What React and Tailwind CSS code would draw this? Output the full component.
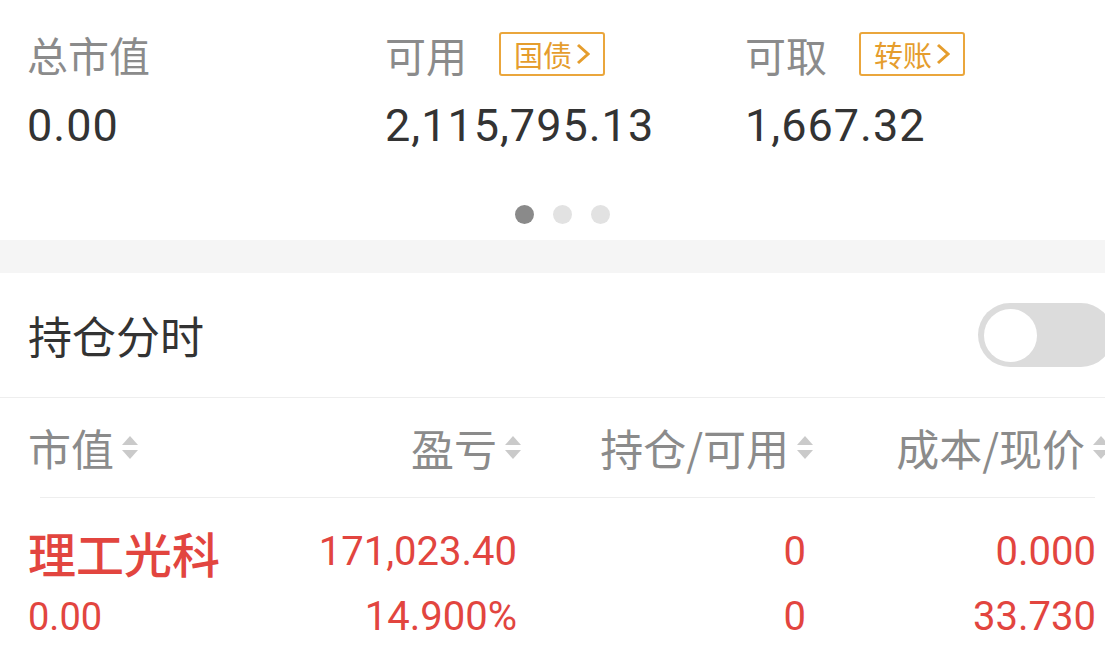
import React from 'react'

const cjk = "font-['Noto_Sans_CJK_SC',sans-serif]"
const num = "font-['Roboto','Noto_Sans_CJK_SC',sans-serif]"

const SortArrows = () => (
  <svg width="18" height="28" viewBox="0 0 18 28" className="shrink-0">
    <path d="M1 11 L9 2 L17 11 Z" fill="#cacaca" />
    <path d="M1 16 L17 16 L9 25 Z" fill="#cacaca" />
  </svg>
)

const Badge = ({ text }) => (
  <div className="flex items-center h-[44px] px-[13px] gap-[4px] border-[2.5px] border-[#eaa63c] rounded-[3px]">
    <span className={`${cjk} text-[29px] leading-none text-[#e59d2d]`}>{text}</span>
    <svg width="14" height="22" viewBox="0 0 14 22">
      <path d="M2 2 L12 11 L2 20" stroke="#e59d2d" strokeWidth="3" fill="none" />
    </svg>
  </div>
)

const Summary = ({ label, value, badge }) => (
  <div className="flex flex-col">
    <div className="flex items-center gap-[32px] h-[48px]">
      <span className={`${cjk} text-[41px] leading-[48px] text-[#8b8b8b]`}>{label}</span>
      {badge && <Badge text={badge} />}
    </div>
    <div className={`${num} mt-[20px] text-[45px] leading-[56px] tracking-[1px] text-[#333333]`}>{value}</div>
  </div>
)

export default function App() {
  return (
    <div className="w-[1105px] h-[654px] overflow-hidden bg-white">
      {/* account summary */}
      <div className="h-[240px] pt-[30px]">
        <div className="grid grid-cols-[358px_360px_1fr] pl-[27px]">
          <Summary label="总市值" value="0.00" />
          <Summary label="可用" value="2,115,795.13" badge="国债" />
          <Summary label="可取" value="1,667.32" badge="转账" />
        </div>
        <div className="flex justify-center gap-[19px] mt-[51px] pl-[20px]">
          <div className="w-[19px] h-[19px] rounded-full bg-[#8a8a8a]" />
          <div className="w-[19px] h-[19px] rounded-full bg-[#e2e2e2]" />
          <div className="w-[19px] h-[19px] rounded-full bg-[#e2e2e2]" />
        </div>
      </div>

      <div className="h-[33px] bg-[#f5f5f5]" />

      {/* 持仓分时 */}
      <div className="h-[125px] flex items-center justify-between pl-[28px] border-b border-[#eeeeee]">
        <span className={`${cjk} text-[44px] leading-none text-[#333333]`}>持仓分时</span>
        <div className="w-[135px] h-[64px] -mr-[8px] mt-[0px] rounded-full bg-[#dcdcdc] flex items-center pl-[6px] shrink-0">
          <div className="w-[53px] h-[53px] rounded-full bg-white" />
        </div>
      </div>

      {/* table header */}
      <div className="ml-[40px] mr-[10px] border-b border-[#eeeeee]">
        <div className={`${cjk} -ml-[12px] -mr-[100px] h-[99px] grid grid-cols-[200px_296px_296px_296px] items-center text-[43px] leading-none text-[#8b8b8b]`}>
          <div className="flex items-center gap-[7px]">
            <span>市值</span>
            <SortArrows />
          </div>
          <div className="flex items-center justify-end gap-[7px] pr-[2px]">
            <span>盈亏</span>
            <SortArrows />
          </div>
          <div className="flex items-center justify-end gap-[7px] pr-[6px]">
            <span>持仓/可用</span>
            <SortArrows />
          </div>
          <div className="flex items-center justify-end gap-[7px] pr-[6px] whitespace-nowrap">
            <span>成本/现价</span>
            <SortArrows />
          </div>
        </div>
      </div>

      {/* holding row */}
      <div className="pt-[25px] pl-[28px] grid grid-cols-[200px_296px_296px_296px] text-[#e2453f]">
        <div className="flex flex-col">
          <span className={`${cjk} font-medium text-[48px] leading-[58px]`}>理工光科</span>
          <span className={`${num} text-[38px] leading-[72px]`}>0.00</span>
        </div>
        <div className={`${num} flex flex-col items-end pr-[7px] text-[40px]`}>
          <span className="leading-[58px]">171,023.40</span>
          <span className="leading-[72px]">14.900%</span>
        </div>
        <div className={`${num} flex flex-col items-end pr-[14px] text-[40px]`}>
          <span className="leading-[58px]">0</span>
          <span className="leading-[72px]">0</span>
        </div>
        <div className={`${num} flex flex-col items-end pr-[20px] text-[40px]`}>
          <span className="leading-[58px]">0.000</span>
          <span className="leading-[72px]">33.730</span>
        </div>
      </div>
    </div>
  )
}
